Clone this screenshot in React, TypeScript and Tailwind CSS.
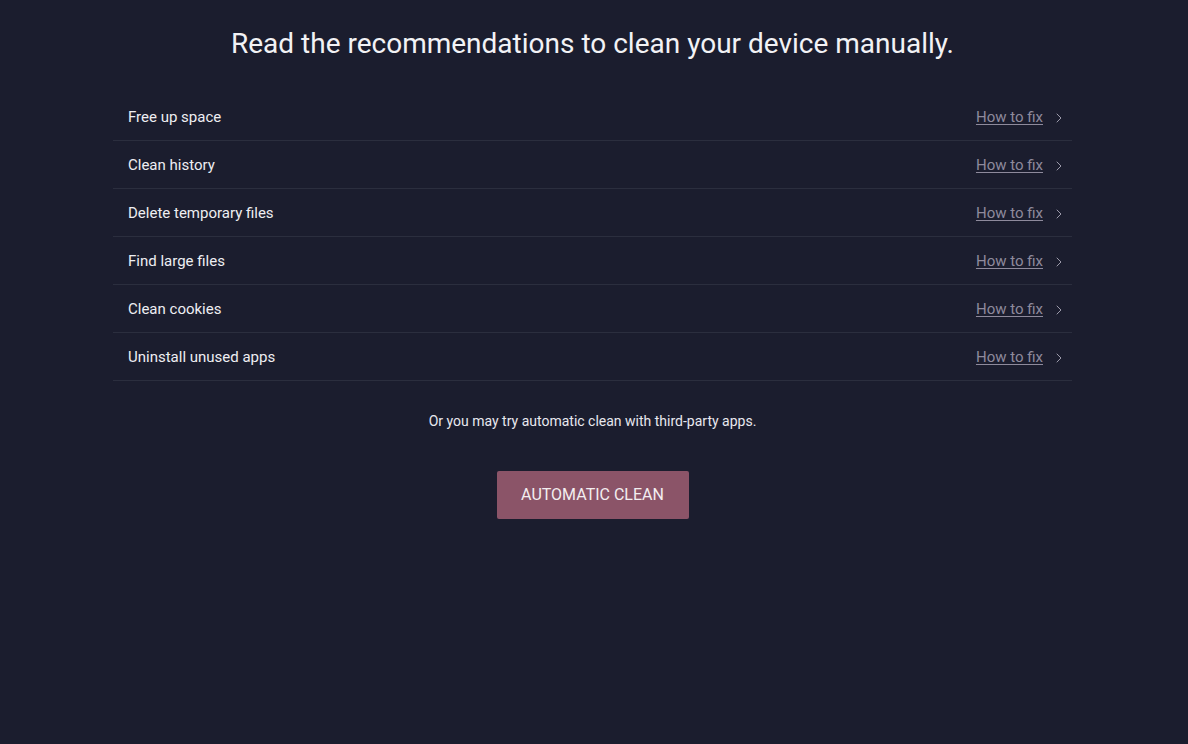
import { ChevronRight } from 'lucide-react';

const items = [
  'Free up space',
  'Clean history',
  'Delete temporary files',
  'Find large files',
  'Clean cookies',
  'Uninstall unused apps',
];

export default function App() {
  return (
    <div className="min-h-[744px] bg-[#1b1d2e] pr-[3px] font-['Roboto',sans-serif] text-white">
      <div className="mx-auto w-[959px] pt-[27px]">
        <h1 className="text-center text-[28px] leading-[34px] text-[#f2f2f5]">
          Read the recommendations to clean your device manually.
        </h1>

        <ul className="mt-[32px]">
          {items.map((item) => (
            <li
              key={item}
              className="flex h-[48px] items-center justify-between border-b border-[#2b2e3e] pt-[2px] pl-[15px] pr-[5px]"
            >
              <span className="text-[15px] text-[#eeeef2]">{item}</span>
              <a href="#" className="flex items-center gap-[8px]">
                <span className="text-[15px] text-[#8e8a9c] underline underline-offset-2">How to fix</span>
                <ChevronRight size={16} strokeWidth={1.5} className="text-[#9c9aaa]" />
              </a>
            </li>
          ))}
        </ul>

        <p className="mt-[30px] text-center text-[14px] text-[#e8e8ee]">
          Or you may try automatic clean with third-party apps.
        </p>

        <div className="mt-[39px] flex justify-center">
          <button className="h-[48px] w-[192px] rounded-[2px] bg-[#8b5468] text-[16px] text-[#f3eef0]">
            AUTOMATIC CLEAN
          </button>
        </div>
      </div>
    </div>
  );
}
